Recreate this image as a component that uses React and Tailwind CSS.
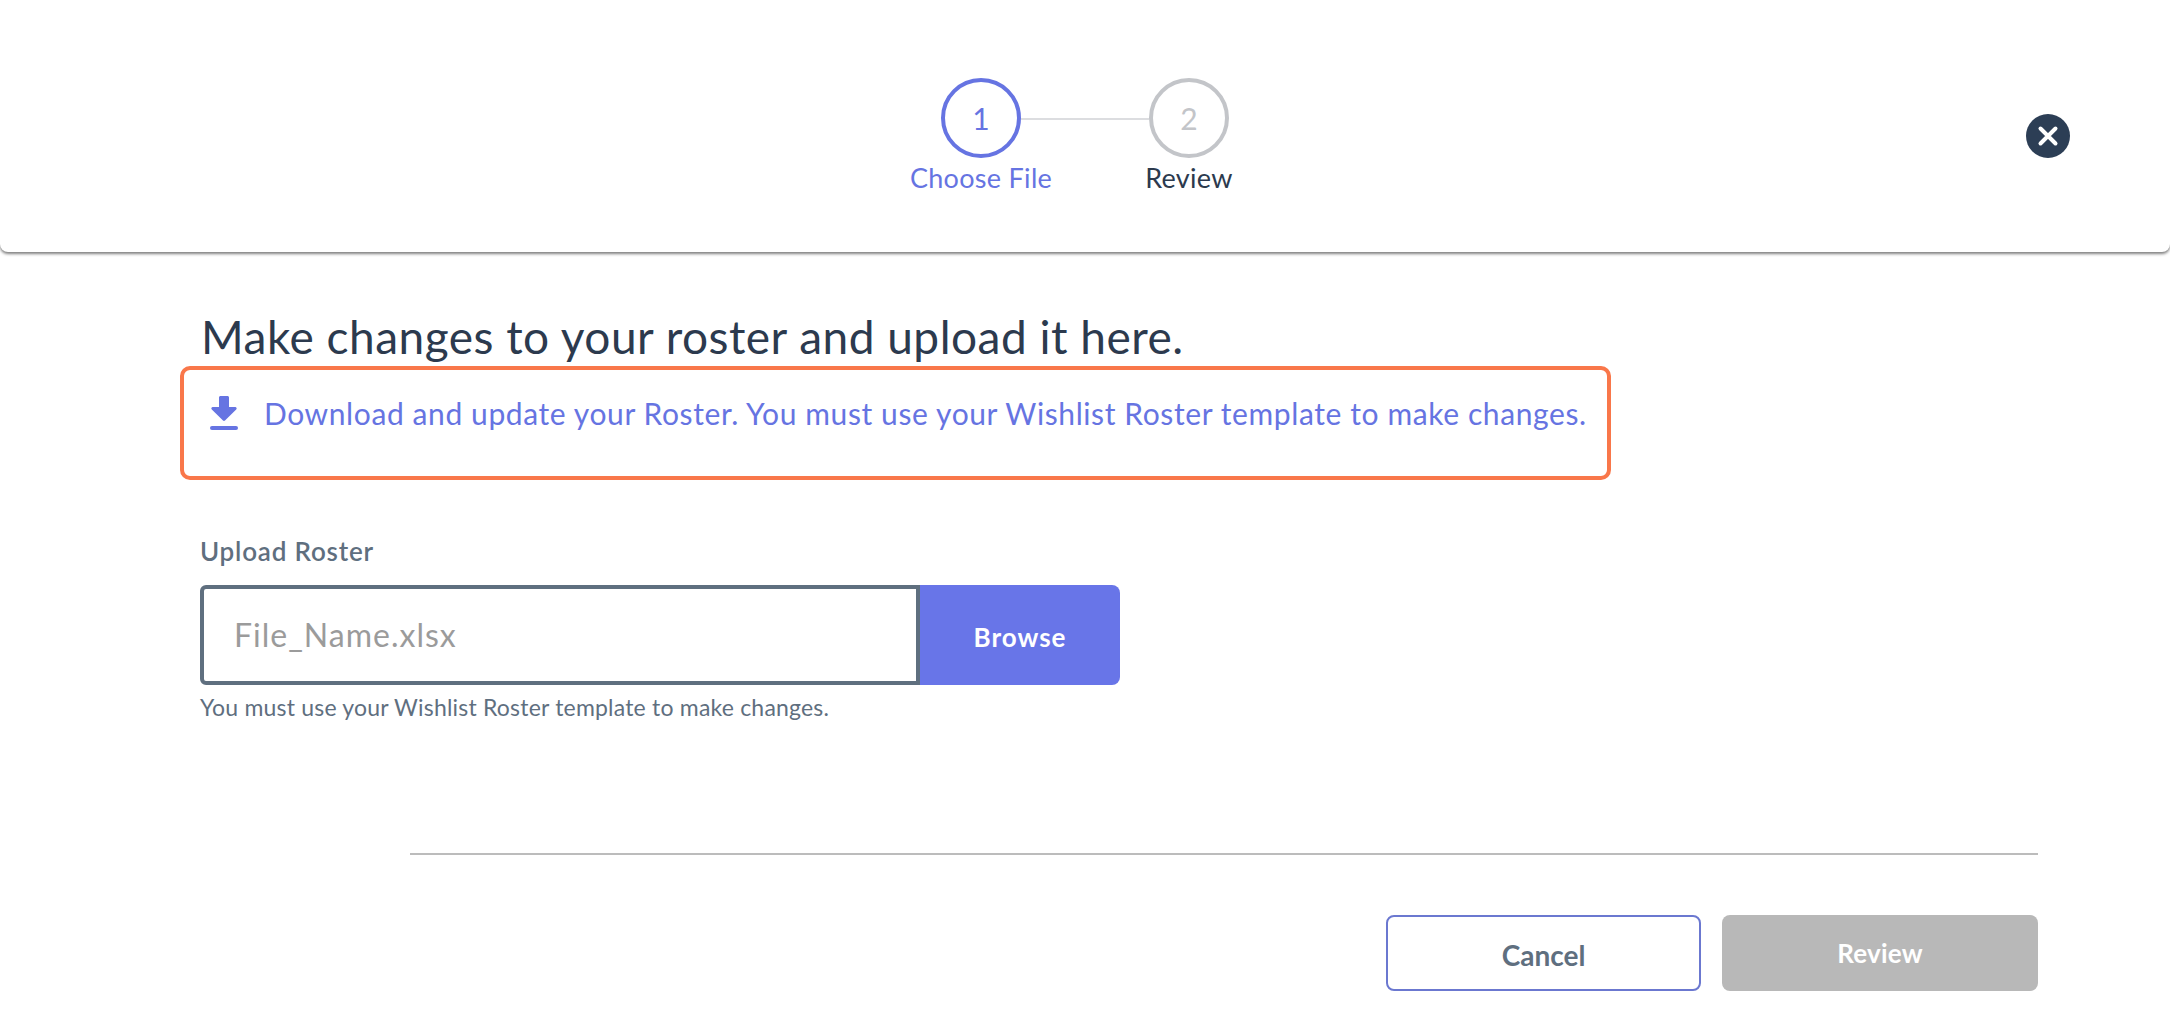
import React from 'react';

const fontStack = { fontFamily: 'Lato, "Noto Sans", sans-serif' };

function Step({ number, label, active }) {
  return (
    <div className="flex w-[80px] flex-col items-center">
      <div
        className={`flex h-[80px] w-[80px] items-center justify-center rounded-full border-[4px] text-[30px] ${
          active ? 'border-[#6674e2] text-[#6674e2]' : 'border-[#c3c5c9] text-[#c3c5c9]'
        }`}
      >
        {number}
      </div>
      <span
        className={`mt-[3px] whitespace-nowrap text-[27px] leading-[34px] tracking-[0.3px] ${
          active ? 'text-[#6674e2]' : 'text-[#2c3a4e]'
        }`}
      >
        {label}
      </span>
    </div>
  );
}

function DownloadIcon() {
  return (
    <svg width="28" height="34" viewBox="0 0 28 34" className="shrink-0">
      <path
        d="M9 1.5C9 .7 9.700 0 10.500 0h7c.8 0 1.500.7 1.500 1.500V11h6.200c1.300 0 2 1.600 1 2.500L15 24.500c-.6.6-1.400.6-2 0L1.800 13.500c-1-.9-.3-2.500 1-2.500H9z"
        fill="#6674e2"
      />
      <rect x="0" y="30" width="28" height="4" rx="2" fill="#6674e2" />
    </svg>
  );
}

function CloseIcon() {
  return (
    <div className="flex h-[44px] w-[44px] items-center justify-center rounded-full bg-[#2c3e55]">
      <svg width="22" height="22" viewBox="0 0 22 22">
        <path d="M3.500 3.500l15 15M18.500 3.500l-15 15" stroke="#fff" strokeWidth="4" strokeLinecap="round" />
      </svg>
    </div>
  );
}

export default function App() {
  return (
    <div className="h-[1013px] w-[2170px] overflow-hidden bg-white" style={fontStack}>
      <header className="grid h-[252px] grid-cols-[1fr_auto_1fr] rounded-b-[8px] bg-white pt-[78px] shadow-[0_2px_3px_rgba(0,0,0,0.5)]">
        <div />
        <div className="flex items-start">
          <Step number="1" label="Choose File" active />
          <div className="mt-[40px] h-[2px] w-[128px] bg-[#dcdde0]" />
          <Step number="2" label="Review" />
        </div>
        <div className="flex justify-end pr-[100px] pt-[36px]">
          <CloseIcon />
        </div>
      </header>

      <main className="pl-[180px] pr-[132px]">
        <h1 className="ml-[21px] mt-[56px] text-[46px] leading-[58px] tracking-[0.5px] text-[#2c3a4e]">
          Make changes to your roster and upload it here.
        </h1>

        <div className="flex h-[114px] w-[1431px] items-start rounded-[10px] border-[4px] border-[#f9774a] pl-[26px] pt-[26px]">
          <DownloadIcon />
          <a className="ml-[26px] text-[30px] leading-[34px] tracking-[0.6px] text-[#6674e2]">
            Download and update your Roster. You must use your Wishlist Roster template to make changes.
          </a>
        </div>

        <div className="ml-[20px] mt-[55px]">
          <label className="block text-[26px] font-semibold leading-[32px] tracking-[0.8px] text-[#5f6f7f]">
            Upload Roster
          </label>
          <div className="mt-[18px] flex h-[100px] w-[920px]">
            <div className="flex w-[720px] items-center rounded-l-[6px] border-[4px] border-[#5f6f7f] pl-[30px] text-[32px] tracking-[1px] text-[#9b9b9b]">
              File_Name.xlsx
            </div>
            <div className="flex w-[200px] items-center justify-center rounded-r-[8px] bg-[#6875e8] pt-[4px] text-[26px] font-bold tracking-[1px] text-white">
              Browse
            </div>
          </div>
          <p className="mt-[8px] text-[23px] leading-[28px] tracking-[0.2px] text-[#5f6f7f]">
            You must use your Wishlist Roster template to make changes.
          </p>
        </div>

        <div className="ml-[230px] mt-[132px] h-[2px] bg-[#bcbcbc]" />

        <div className="mt-[60px] flex justify-end gap-[21px]">
          <button className="h-[76px] w-[315px] rounded-[8px] border-2 border-[#6b78d0] bg-white pt-[3px] text-[28px] font-bold text-[#5f6f7f]">
            Cancel
          </button>
          <button className="h-[76px] w-[316px] rounded-[8px] bg-[#b8b8b8] text-[26px] font-bold tracking-[0.2px] text-white">
            Review
          </button>
        </div>
      </main>
    </div>
  );
}
